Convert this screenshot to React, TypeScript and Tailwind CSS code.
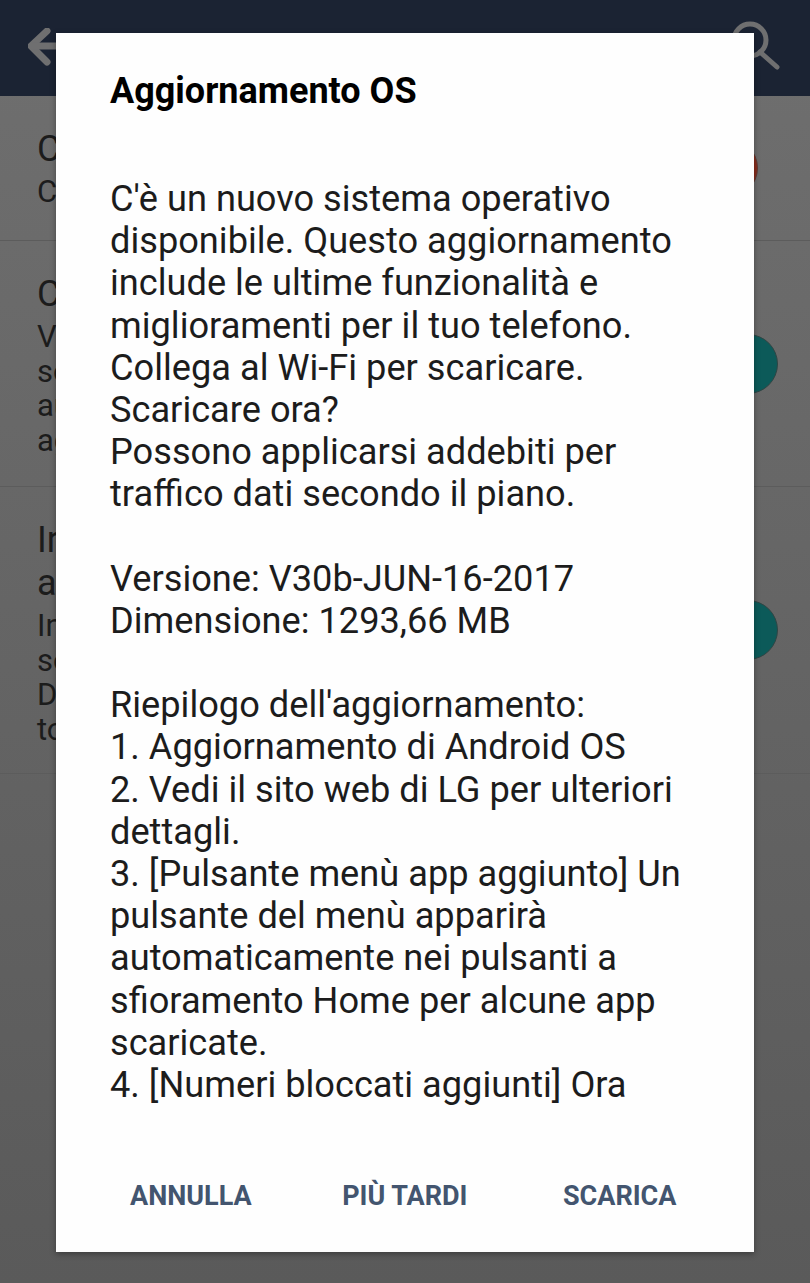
import React from 'react';

const bodyLines = [
  "C'è un nuovo sistema operativo",
  'disponibile. Questo aggiornamento',
  'include le ultime funzionalità e',
  'miglioramenti per il tuo telefono.',
  'Collega al Wi-Fi per scaricare.',
  'Scaricare ora?',
  'Possono applicarsi addebiti per',
  'traffico dati secondo il piano.',
  '',
  'Versione: V30b-JUN-16-2017',
  'Dimensione: 1293,66 MB',
  '',
  "Riepilogo dell'aggiornamento:",
  '1. Aggiornamento di Android OS',
  '2. Vedi il sito web di LG per ulteriori',
  'dettagli.',
  '3. [Pulsante menù app aggiunto] Un',
  'pulsante del menù apparirà',
  'automaticamente nei pulsanti a',
  'sfioramento Home per alcune app',
  'scaricate.',
  '4. [Numeri bloccati aggiunti] Ora',
];

const rows = [
  { title: ['C'], desc: ['C'], h: 'h-[145px]', dot: 'bg-[#8a2c1c] border-[#5f3a33] mr-[52px]' },
  { title: ['C'], desc: ['Ve', 'so', 'au', 'ag'], h: 'h-[246px]', dot: 'bg-[#0c5a59] border-[#2f4544] mr-[32px]' },
  { title: ['Ir', 'a'], desc: ['In', 'so', 'D', 'to'], h: 'h-[287px]', dot: 'bg-[#0c5a59] border-[#2f4544] mr-[32px]' },
];

export default function App() {
  return (
    <div className="relative h-[1283px] w-[810px] overflow-hidden bg-gradient-to-b from-[#6f6f6f] to-[#5a5a5a] font-['Roboto',sans-serif]">
      {/* Header, dimmed by the dialog scrim */}
      <div className="flex h-[96px] items-center justify-between bg-[#1b2333] pl-[28px] pr-[30px]">
        <svg width="36" height="38" viewBox="0 0 36 38" fill="none" stroke="#6f6f70" strokeWidth="7" strokeLinecap="round" strokeLinejoin="round" className="mt-[-3px]">
          <path d="M19 3 3 18 19 34" />
          <path d="M4 18h32" />
        </svg>
        <svg width="52" height="52" viewBox="0 0 52 52" fill="none" stroke="#6f6f70" strokeWidth="5" strokeLinecap="round" className="mt-[-6px]">
          <circle cx="22" cy="21" r="16" />
          <path d="M32 33 49 48" />
        </svg>
      </div>

      {/* List behind the dialog */}
      <div>
        {rows.map((row, i) => (
          <div key={i} className={`flex items-start justify-between border-b border-[#5c5c5c] ${row.h}`}>
            <div className="pl-[37px] pt-[32px] text-[#1c1c1c]">
              {row.title.map((t, j) => (
                <div key={j} className="text-[36px] leading-[43px]">{t}</div>
              ))}
              <div className="mt-[4px]">
                {row.desc.map((t, j) => (
                  <div key={j} className="text-[31px] leading-[34.7px]">{t}</div>
                ))}
              </div>
            </div>
            <div className={`h-[60px] w-[60px] self-center rounded-full border ${row.dot}`} />
          </div>
        ))}
      </div>

      {/* Dialog */}
      <div className="absolute left-[56px] top-[33px] flex h-[1219px] w-[698px] flex-col bg-[#fefefe] shadow-[0_2px_6px_rgba(0,0,0,0.35)]">
        <h1 className="pl-[54px] pt-[35px] text-[36px] font-bold leading-[46px] text-black">Aggiornamento OS</h1>
        <div className="mt-[64px] pl-[54px] text-[36.2px] leading-[42.2px] text-[#1c1c1c]">
          {bodyLines.map((line, i) => (
            <div key={i} className="h-[42.2px] whitespace-nowrap">{line}</div>
          ))}
        </div>
        <div className="mt-auto flex h-[115px] items-center pt-[3px] text-[27px] font-bold text-[#43556f]">
          <span className="ml-[74px]">ANNULLA</span>
          <span className="ml-[90.5px]">PIÙ TARDI</span>
          <span className="ml-[95.5px]">SCARICA</span>
        </div>
      </div>
    </div>
  );
}
